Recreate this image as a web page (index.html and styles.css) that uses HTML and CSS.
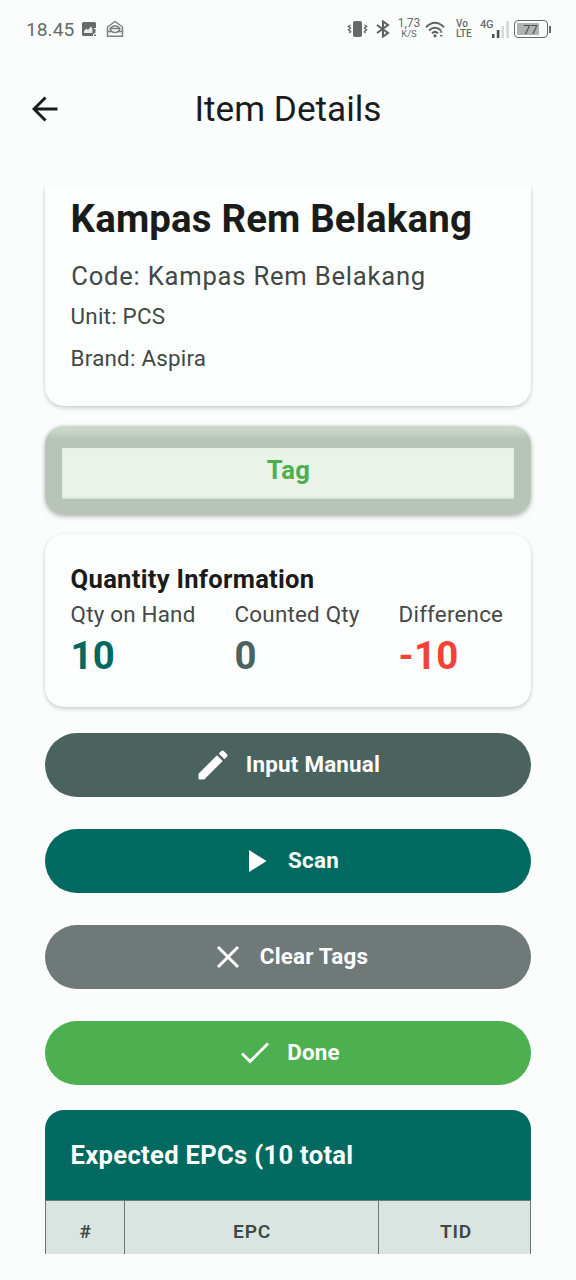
FILE: index.html
```html
<!DOCTYPE html>
<html lang="id">
<head>
<meta charset="utf-8">
<title>Item Details</title>
<link rel="stylesheet" href="styles.css">
</head>
<body>
<header class="status">
  <span class="clock">18.45</span>
  <svg class="st-image" width="14" height="14" viewBox="0 0 14 14"><path d="M1.500 0H12.500Q14 0 14 1.500V6H12V12H11V14H1.500Q0 14 0 12.500V1.500Q0 0 1.500 0Z" fill="#666a69"/><path d="M2 11V9L4.500 6.500L6 8L9 4.500L10.500 7V11Z" fill="#e9ecea"/><path d="M12 12.500h2V14h-2zM12 7h1.500v4H12z" fill="#666a69"/></svg>
  <svg class="st-mail" width="18" height="18" viewBox="0 0 18 18" fill="none" stroke="#7d8280" stroke-width="1.500" stroke-linejoin="round"><path d="M1.500 7L9 1.500L16.500 7V16.300H1.500Z"/><path d="M4 8.500Q9 3 14 8.500Q13 12.500 9 12.500Q5 12.500 4 8.500ZM4 8.500H14M1.500 11L4.800 12M16.500 11L13.200 12"/></svg>
  <div class="status-right">
    <svg width="21" height="18" viewBox="0 0 21 18"><rect x="6" y="1" width="9" height="16" rx="2" fill="#666a69"/><path d="M3.500 5L1.500 6.500L3.500 8L1.500 10L3.500 11.500L2.500 13M17.500 5L19.500 6.500L17.500 8L19.500 10L17.500 11.500L18.500 13" fill="none" stroke="#666a69" stroke-width="1.500"/></svg>
    <svg class="st-bt" width="14" height="18" viewBox="0 0 14 18"><path d="M1 5L12 13L7 16.500V1.500L12 5L1 13" fill="none" stroke="#5d6160" stroke-width="2.100"/></svg>
    <div class="speed"><span class="speed-n">1,73</span><span class="speed-u">K/S</span></div>
    <svg class="st-wifi" width="20" height="17" viewBox="0 0 20 17"><g fill="none" stroke="#5d6160" stroke-width="2"><path d="M1 6.200Q10 -2.600 19 6.200M4 9.500Q10 4 16 9.500M7 12.200Q10 9.500 13 12.200"/></g><circle cx="10" cy="14.800" r="1.600" fill="#5d6160"/><path d="M14.500 11.500L16.200 9.500L18 11.500ZM14.500 14L16.200 16L18 14Z" fill="#5d6160"/></svg>
    <div class="volte"><span class="vo">Vo</span><span>LTE</span></div>
    <span class="net">4G</span>
    <svg class="st-signal" width="17" height="17" viewBox="0 0 17 17"><path d="M0 13h2.500v4H0zM4.800 9h2.600v8H4.800z" fill="#4d5150"/><path d="M9.500 5h2.500v12H9.500zM14.300 0h2.500v17h-2.500z" fill="#d3d7d5"/></svg>
    <div class="battery"><span class="battery-level">77</span></div>
    <span class="battery-tip"></span>
  </div>
</header>
<nav class="appbar">
  <svg class="back" width="26" height="26" viewBox="0 0 26 26" fill="none" stroke="#191c1b" stroke-width="2.900"><path d="M25.500 13H2.500M13.500 1.500L2 13L13.500 24.500"/></svg>
  <h1 class="title">Item Details</h1>
</nav>
<main class="content">
  <section class="card item">
    <h2 class="name">Kampas Rem Belakang</h2>
    <p class="code">Code: Kampas Rem Belakang</p>
    <p class="meta">Unit: PCS</p>
    <p class="meta brand">Brand: Aspira</p>
  </section>
  <section class="tag"><div class="tag-inner">Tag</div></section>
  <section class="card qty">
    <h3 class="qty-title">Quantity Information</h3>
    <div class="stats">
      <div><p class="label">Qty on Hand</p><p class="num hand">10</p></div>
      <div><p class="label">Counted Qty</p><p class="num counted">0</p></div>
      <div><p class="label">Difference</p><p class="num diff">-10</p></div>
    </div>
  </section>
  <div class="actions">
    <button class="btn manual"><svg width="30" height="30" viewBox="0 0 30 30" fill="#fff"><path d="M0.500 23.800L19 5.300L24.700 11L6.200 29.500H1.500Q0.500 29.500 0.500 28.500ZM20.700 3.600L23.300 1Q24.500 0 25.700 1L29 4.300Q30 5.500 29 6.700L26.400 9.300Z"/></svg><span>Input Manual</span></button>
    <button class="btn scan"><svg width="18" height="22" viewBox="0 0 18 22" fill="#fff"><path d="M0 0L17.600 11L0 22Z"/></svg><span>Scan</span></button>
    <button class="btn clear"><svg width="24" height="24" viewBox="0 0 24 24" stroke="#fff" stroke-width="3"><path d="M2 2L22 22M22 2L2 22"/></svg><span>Clear Tags</span></button>
    <button class="btn done"><svg width="28" height="22" viewBox="0 0 28 22" fill="none" stroke="#fff" stroke-width="3"><path d="M1 11.500L9 19.500L27 1.500"/></svg><span>Done</span></button>
  </div>
  <section class="epcs">
    <h3 class="epcs-title">Expected EPCs (10 total</h3>
    <div class="row"><span>#</span><span>EPC</span><span>TID</span></div>
  </section>
</main>
</body>
</html>
```
FILE: styles.css
```css
* { box-sizing: border-box; }
body { margin: 0; height: 1280px; background: #fbfdfc; font-family: Roboto, sans-serif; color: #191c1b; overflow: hidden; }
h1, h2, h3, p { margin: 0; font-weight: 400; white-space: nowrap; }

.status { height: 58px; display: flex; align-items: center; padding: 0 25px 0 26px; color: #666a69; }
.clock { font-size: 19.200px; line-height: 24px; width: 56px; margin-top: 1px; }
.st-mail { margin-left: 10px; }
.status-right { margin-left: auto; display: flex; align-items: center; }
.st-bt { margin-left: 8px; }
.speed { width: 24px; margin-left: 7px; display: flex; flex-direction: column; align-items: center; white-space: nowrap; margin-top: -3px; }
.speed-n { font-size: 12px; line-height: 11px; }
.speed-u { font-size: 9.500px; line-height: 9px; }
.st-wifi { margin-left: 4px; }
.volte { width: 17px; margin-left: 11px; display: flex; flex-direction: column; font-size: 10px; line-height: 10px; font-weight: 500; letter-spacing: -.2px; }
.vo { letter-spacing: 0; }
.net { font-size: 11px; line-height: 12px; font-weight: 500; width: 14px; margin: -8px 0 0 7px; white-space: nowrap; letter-spacing: -.3px; }
.st-signal { margin-left: -2px; }
.battery { width: 34px; height: 18px; margin-left: 5px; padding: 1px 2px; border: 1.500px solid #666a69; border-radius: 4px; }
.battery-level { display: block; width: 22px; height: 12px; margin-top: 1px; background: #afb3b1; border-radius: 1px; color: #4a4e4d; font-size: 13px; line-height: 13px; text-align: center; padding-left: 5px; }
.battery-tip { width: 2px; height: 7px; margin: 0 0 0 1px; background: #666a69; }

.appbar { height: 102px; display: grid; grid-template-columns: 26px 1fr 26px; align-items: center; padding: 0 32px; }
.title { font-size: 35.200px; line-height: 44px; text-align: center; }

.content { height: 1068px; margin-top: 26px; padding: 0 45px; overflow: hidden; }
.card { background: #fcfefd; border-radius: 19px; padding: 0 25.600px; box-shadow: 0 2px 4px rgba(0,0,0,.18), 0 0 2px rgba(0,0,0,.08); }
.item { height: 220px; padding-top: 7px; border-radius: 0 0 19px 19px; }
.name { font-size: 38.400px; line-height: 51px; font-weight: 700; letter-spacing: .17px; }
.code { font-size: 25.600px; line-height: 38px; letter-spacing: .78px; margin: 13px 0 0 .6px; color: #3f4946; }
.meta { font-size: 22.400px; line-height: 32px; letter-spacing: .22px; margin-top: 5px; color: #3f4946; }
.brand { margin-top: 10px; }
.tag { height: 89px; margin-top: 20px; padding: 22px 17px 16px; border-radius: 19px; background: linear-gradient(#d0ded0 0, #b9c4b9 13px); box-shadow: 0 2px 5px rgba(0,0,0,.22), 0 0 4px rgba(100,130,100,.2), inset 0 0 3px rgba(190,210,190,.5); }
.tag-inner { height: 51px; background: #e9f3e8; color: #4caf50; font-size: 25.600px; line-height: 45px; font-weight: 700; letter-spacing: .35px; text-align: center; padding-left: 1px; box-shadow: inset 0 -1px 2px rgba(90,110,90,.2); }
.qty { height: 173px; margin-top: 19px; padding-top: 26px; }
.qty-title { font-size: 25.600px; line-height: 38px; font-weight: 700; letter-spacing: .28px; }
.stats { display: grid; grid-template-columns: repeat(3, 164px); }
.label { font-size: 22.400px; line-height: 32px; letter-spacing: .2px; color: #454847; }
.num { font-size: 38.400px; line-height: 51px; font-weight: 700; letter-spacing: .2px; }
.hand { color: #006a60; }
.counted { color: #4a635e; }
.diff { color: #f44336; }

.actions { display: flex; flex-direction: column; gap: 32px; margin-top: 26px; }
.btn { height: 64px; border: 0; border-radius: 32px; display: flex; align-items: center; justify-content: center; color: #fff; font: 700 22.400px/32px Roboto, sans-serif; letter-spacing: .2px; padding: 0; }
.btn span { margin-top: -2px; }
.manual { background: #4a635e; gap: 18px; padding-left: 2px; }
.scan { background: #006a60; gap: 21px; padding-left: 12px; }
.clear { background: #6f7977; gap: 20px; padding-left: 8px; }
.done { background: #4caf50; gap: 18px; padding-left: 5px; }

.epcs { margin-top: 25px; border-radius: 19px 19px 0 0; overflow: hidden; }
.epcs-title { height: 90px; padding-left: 25.600px; background: #006a60; color: #fff; font-size: 25.600px; line-height: 91px; font-weight: 700; letter-spacing: .3px; }
.row { height: 58px; display: grid; grid-template-columns: 79px 254px 151px; background: #dae5e1; border: 1px solid #6f7977; }
.row span { border-right: 1px solid #6f7977; padding-left: 1px; font-size: 19.200px; line-height: 61px; font-weight: 600; letter-spacing: .7px; color: #3f4946; text-align: center; }
.row span:last-child { border: 0; padding-left: 3px; }
```
